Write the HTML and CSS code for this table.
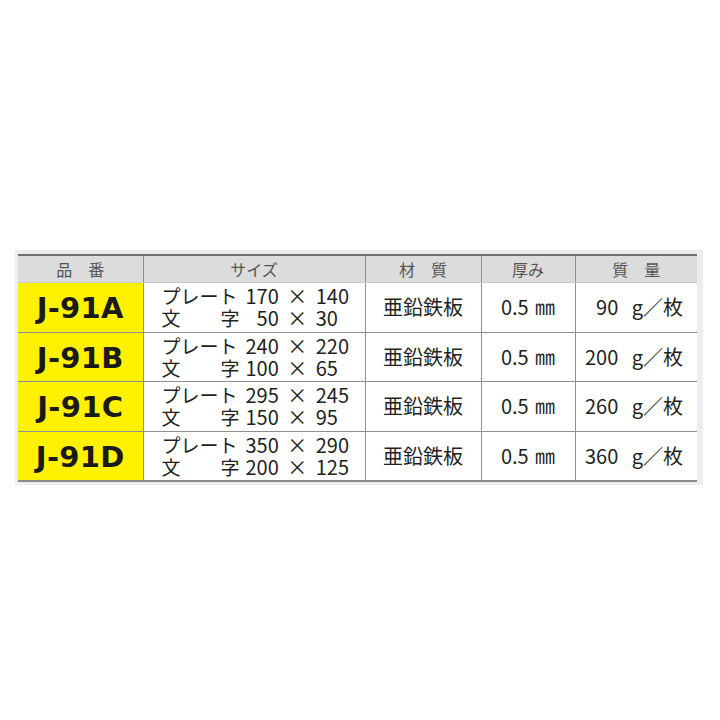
FILE: index.html
```html
<!DOCTYPE html>
<html lang="ja">
<head>
<meta charset="utf-8">
<link rel="stylesheet" href="styles.css">
</head>
<body>
<div class="frame">
<table class="spec">
  <colgroup>
    <col class="c1"><col class="c2"><col class="c3"><col class="c4"><col class="c5">
  </colgroup>
  <thead>
    <tr>
      <th>品　番</th>
      <th>サイズ</th>
      <th>材　質</th>
      <th>厚み</th>
      <th>質　量</th>
    </tr>
  </thead>
  <tbody>
    <tr>
      <td class="code">J-91A</td>
      <td class="size">
        <div class="ln"><span class="lb">プレート</span><span class="num">170 × 140</span></div>
        <div class="ln"><span class="lb lj"><span>文</span><span>字</span></span><span class="num">&#8199;50 × 30</span></div>
      </td>
      <td class="mat">亜鉛鉄板</td>
      <td class="thk">0.5 ㎜</td>
      <td class="wt">90 g／枚</td>
    </tr>
    <tr>
      <td class="code">J-91B</td>
      <td class="size">
        <div class="ln"><span class="lb">プレート</span><span class="num">240 × 220</span></div>
        <div class="ln"><span class="lb lj"><span>文</span><span>字</span></span><span class="num">100 × 65</span></div>
      </td>
      <td class="mat">亜鉛鉄板</td>
      <td class="thk">0.5 ㎜</td>
      <td class="wt">200 g／枚</td>
    </tr>
    <tr>
      <td class="code">J-91C</td>
      <td class="size">
        <div class="ln"><span class="lb">プレート</span><span class="num">295 × 245</span></div>
        <div class="ln"><span class="lb lj"><span>文</span><span>字</span></span><span class="num">150 × 95</span></div>
      </td>
      <td class="mat">亜鉛鉄板</td>
      <td class="thk">0.5 ㎜</td>
      <td class="wt">260 g／枚</td>
    </tr>
    <tr>
      <td class="code">J-91D</td>
      <td class="size">
        <div class="ln"><span class="lb">プレート</span><span class="num">350 × 290</span></div>
        <div class="ln"><span class="lb lj"><span>文</span><span>字</span></span><span class="num">200 × 125</span></div>
      </td>
      <td class="mat">亜鉛鉄板</td>
      <td class="thk">0.5 ㎜</td>
      <td class="wt">360 g／枚</td>
    </tr>
  </tbody>
</table>
</div>
</body>
</html>
```

FILE: styles.css
```css
html, body {
  margin: 0;
  padding: 0;
  background: #ffffff;
}
body {
  font-family: "Noto Sans CJK JP", "Noto Sans", sans-serif;
  color: #231f20;
}
.frame {
  margin: 250px 0 0 15px;
  width: 681px;
  padding: 4px 4px 3px 3px;
  background: #ececf1;
}
.spec {
  width: 679px;
  table-layout: fixed;
  border-collapse: collapse;
  background: #ffffff;
  border-top: 2px solid #707070;
  border-bottom: 2px solid #8a8a8a;
}
.c1 { width: 125px; }
.c2 { width: 222px; }
.c3 { width: 116px; }
.c4 { width: 94px; }
.c5 { width: 122px; }
.spec th {
  height: 26px;
  padding: 0;
  background: #dcdcdc;
  color: #555555;
  font-weight: normal;
  font-size: 16px;
  line-height: 26px;
  border-left: 1.5px solid #8f8f8f;
  border-bottom: 1px solid #c8c8c8;
}
.spec th:first-child { border-left: none; }
.spec tbody tr { height: 49.5px; }
.spec td {
  padding: 0;
  border-left: 1.5px solid #8f8f8f;
  border-top: 1.5px solid #8f8f8f;
  font-size: 20px;
  line-height: 24px;
  text-align: center;
  vertical-align: middle;
  word-spacing: 2px;
}
.spec td:first-child { border-left: none; }
.spec tbody tr:first-child td { border-top: none; }
.spec td.code {
  background: #fff100;
  font-family: "DejaVu Sans", sans-serif;
  font-weight: bold;
  font-size: 29px;
  line-height: 32px;
  letter-spacing: 0.3px;
  word-spacing: 0;
  color: #1a1a1a;
  padding-top: 2px;
}
.spec td.size {
  text-align: left;
  padding-left: 18px;
  font-size: 19px;
  line-height: 22px;
  word-spacing: 0;
}
.ln {
  display: flex;
  white-space: pre;
}
.lb {
  width: 78px;
  margin-right: 6px;
}
.lj {
  display: flex;
  justify-content: space-between;
}
.num {
  font-size: 20px;
  word-spacing: 4px;
}
.spec td.wt {
  text-align: right;
  padding-right: 14px;
  word-spacing: 9px;
}
```
